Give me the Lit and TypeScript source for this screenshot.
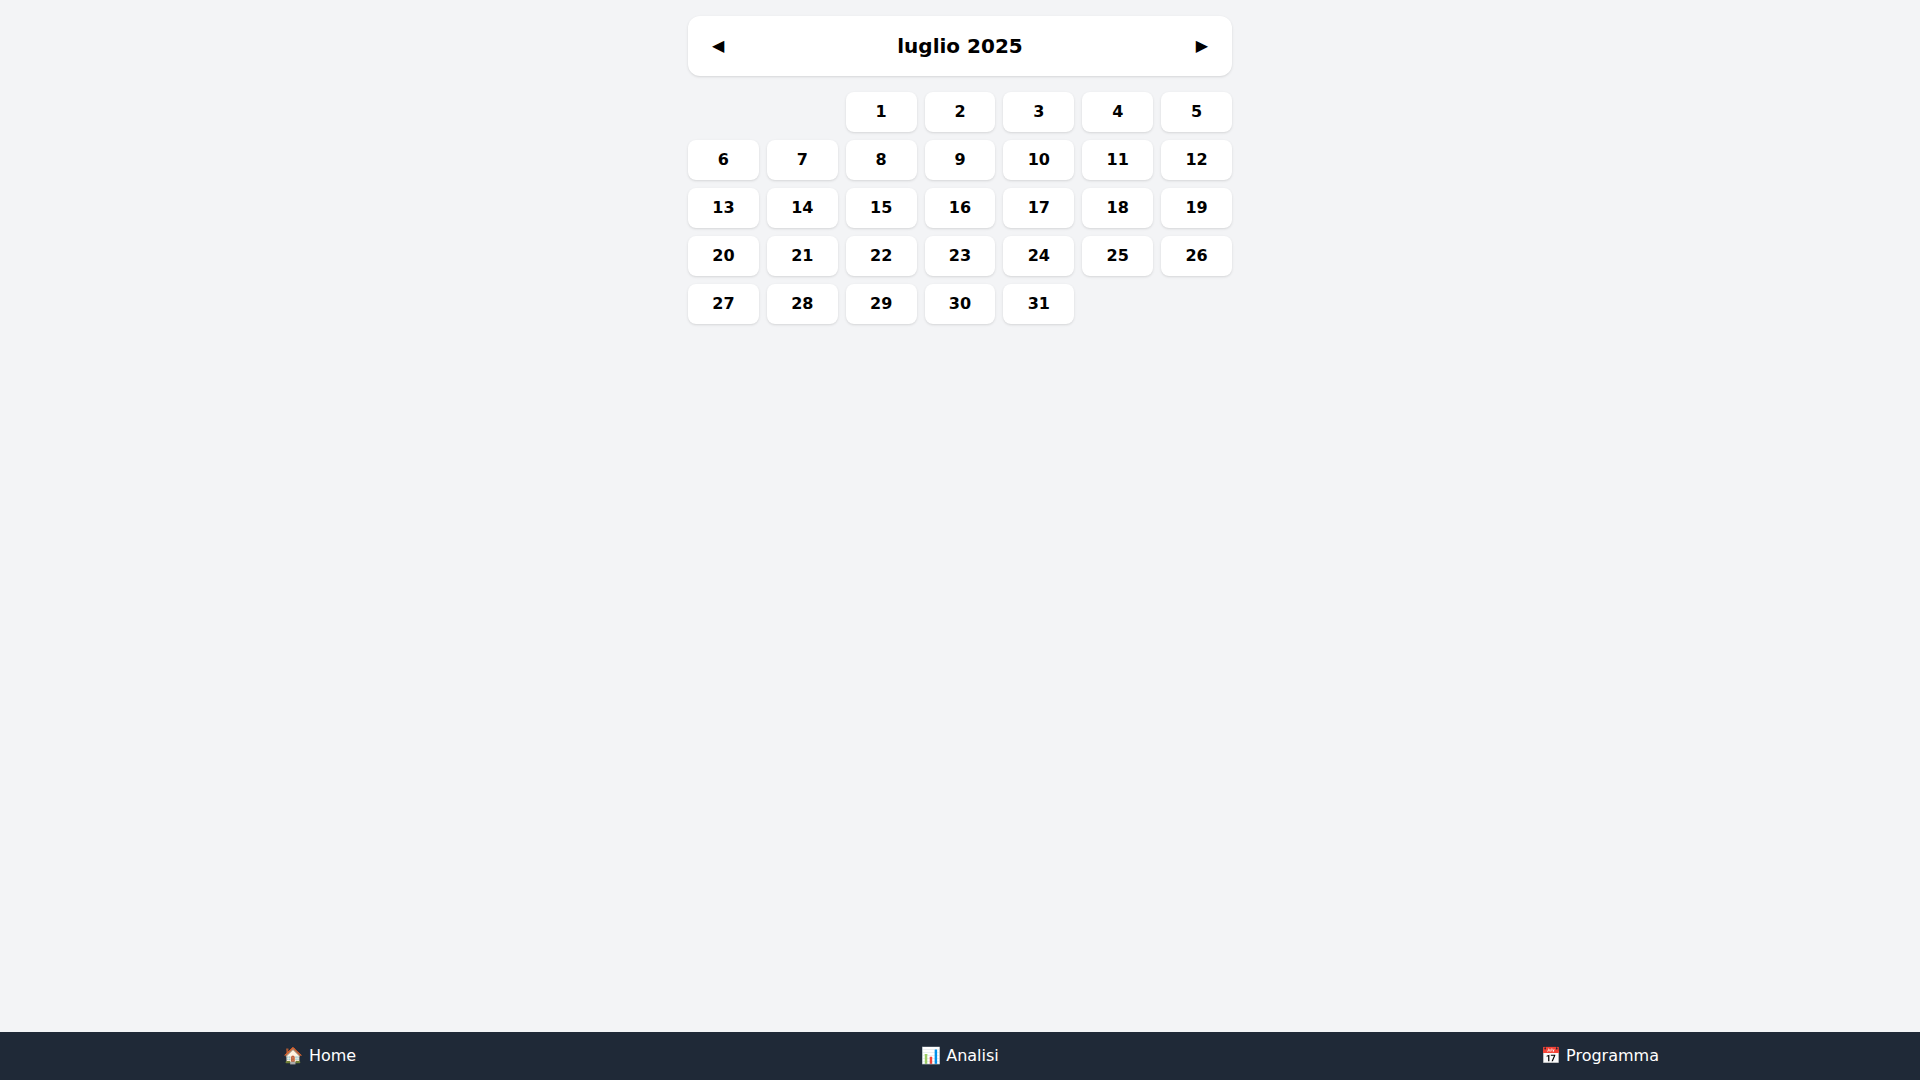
import { LitElement, html, css } from "lit";
import { customElement, state } from "lit/decorators.js";

const NAV_ITEMS = [
  { icon: "🏠", label: "Home", href: "#home" },
  { icon: "📊", label: "Analisi", href: "#analisi" },
  { icon: "📅", label: "Programma", href: "#programma" },
];

@customElement("month-calendar")
export class MonthCalendar extends LitElement {
  static styles = css`
    :host {
      display: block;
    }
    .header {
      display: flex;
      align-items: center;
      justify-content: space-between;
      padding: 16px;
      margin-bottom: 16px;
      background: #fff;
      border-radius: 12px;
      box-shadow: 0 1px 3px rgb(0 0 0 / 0.1), 0 1px 2px -1px rgb(0 0 0 / 0.1);
    }
    .title {
      margin: 0;
      font-size: 20px;
      line-height: 28px;
      font-weight: 700;
    }
    button {
      font: inherit;
      color: inherit;
      border: 0;
      cursor: pointer;
    }
    .arrow {
      padding: 0 8px;
      background: transparent;
    }
    .days {
      display: grid;
      grid-template-columns: repeat(7, minmax(0, 1fr));
      gap: 8px;
    }
    .day {
      padding: 8px;
      background: #fff;
      border-radius: 8px;
      font-weight: 700;
      text-align: center;
      box-shadow: 0 1px 3px rgb(0 0 0 / 0.1), 0 1px 2px -1px rgb(0 0 0 / 0.1);
    }
  `;

  @state() private year = 2025;
  @state() private month = 6;

  private move(step: number) {
    const next = new Date(this.year, this.month + step, 1);
    this.year = next.getFullYear();
    this.month = next.getMonth();
  }

  render() {
    const first = new Date(this.year, this.month, 1);
    const count = new Date(this.year, this.month + 1, 0).getDate();
    const blanks = Array.from({ length: first.getDay() });
    const days = Array.from({ length: count }, (_, i) => i + 1);
    const title = first.toLocaleDateString("it-IT", { month: "long", year: "numeric" });

    return html`
      <div class="header">
        <button class="arrow" type="button" @click=${() => this.move(-1)}>◀</button>
        <h2 class="title">${title}</h2>
        <button class="arrow" type="button" @click=${() => this.move(1)}>▶</button>
      </div>
      <div class="days">
        ${blanks.map(() => html`<div></div>`)}
        ${days.map((day) => html`<button class="day" type="button">${day}</button>`)}
      </div>
    `;
  }
}

@customElement("app-root")
export class AppRoot extends LitElement {
  static styles = css`
    :host {
      display: flex;
      flex-direction: column;
      min-height: 100vh;
      background: #f3f4f6;
      color: #000;
      font-family: "DejaVu Sans", "Noto Color Emoji", sans-serif;
      font-size: 16px;
      line-height: 24px;
    }
    .content {
      flex: 1;
      box-sizing: border-box;
      width: 100%;
      max-width: 576px;
      margin: 0 auto;
      padding: 16px;
    }
    .nav {
      position: sticky;
      bottom: 0;
      display: flex;
      background: #1f2937;
    }
    .link {
      flex: 1;
      padding: 12px 0;
      color: #fff;
      text-align: center;
      text-decoration: none;
    }
  `;

  render() {
    return html`
      <main class="content"><month-calendar></month-calendar></main>
      <nav class="nav">
        ${NAV_ITEMS.map(
          (item) => html`<a class="link" href=${item.href}>${item.icon} ${item.label}</a>`
        )}
      </nav>
    `;
  }
}
